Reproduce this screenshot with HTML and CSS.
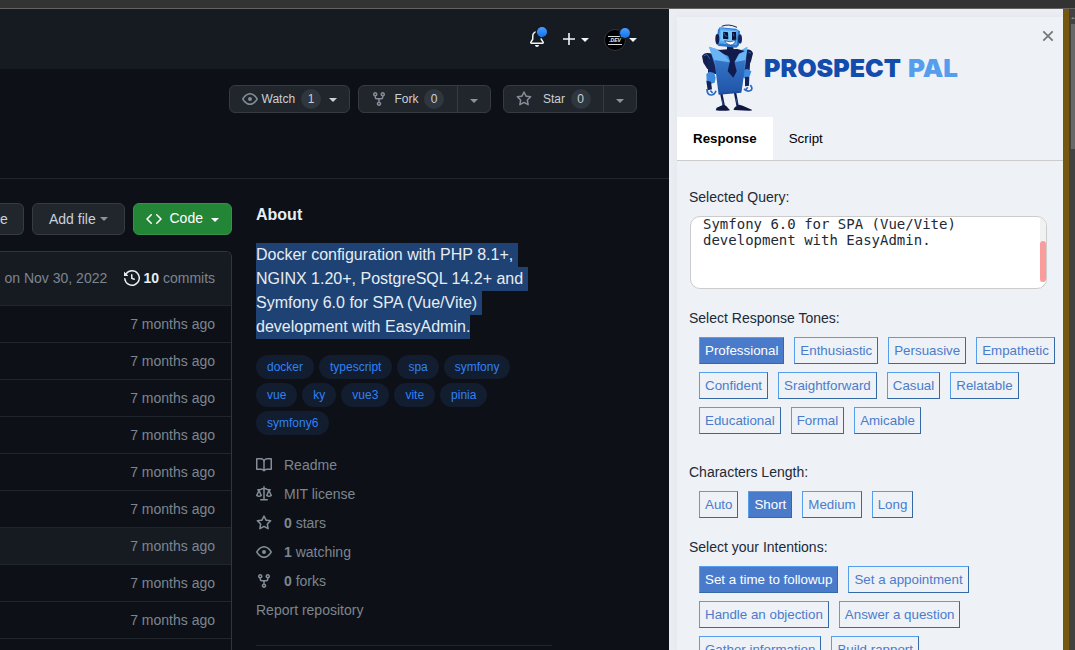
FILE: index.html
```html
<!DOCTYPE html>
<html lang="en">
<head>
<meta charset="utf-8">
<title>Prospect Pal</title>
<link rel="stylesheet" href="styles.css">
</head>
<body>
<svg class="defs" aria-hidden="true">
  <symbol id="eye" viewBox="0 0 16 16"><path d="M8 2c1.981 0 3.671.992 4.933 2.078 1.27 1.091 2.187 2.345 2.637 3.023a1.62 1.62 0 0 1 0 1.798c-.45.678-1.367 1.932-2.637 3.023C11.67 13.008 9.981 14 8 14s-3.671-.992-4.933-2.078C1.797 10.831.88 9.577.43 8.899a1.62 1.62 0 0 1 0-1.798c.45-.678 1.367-1.932 2.637-3.023C4.33 2.992 6.019 2 8 2ZM1.679 7.932a.12.12 0 0 0 0 .136c.411.622 1.241 1.75 2.366 2.717C5.176 11.758 6.527 12.5 8 12.5s2.825-.742 3.955-1.715c1.124-.967 1.954-2.096 2.366-2.717a.12.12 0 0 0 0-.136c-.412-.621-1.242-1.75-2.366-2.717C10.824 4.242 9.473 3.5 8 3.5s-2.824.742-3.955 1.715C2.92 6.182 2.09 7.31 1.679 7.932ZM8 10a2 2 0 1 1 0-4 2 2 0 0 1 0 4Z"/></symbol>
  <symbol id="fork" viewBox="0 0 16 16"><path d="M5 5.372v.878c0 .414.336.75.75.75h4.5a.75.75 0 0 0 .75-.75v-.878a2.25 2.25 0 1 1 1.5 0v.878a2.25 2.25 0 0 1-2.25 2.25h-1.5v2.128a2.251 2.251 0 1 1-1.5 0V8.5h-1.5A2.25 2.25 0 0 1 3.5 6.25v-.878a2.25 2.25 0 1 1 1.5 0ZM5 3.25a.75.75 0 1 0-1.5 0 .75.75 0 0 0 1.5 0Zm6.75.75a.75.75 0 1 0 0-1.5.75.75 0 0 0 0 1.5Zm-3 8.75a.75.75 0 1 0-1.5 0 .75.75 0 0 0 1.5 0Z"/></symbol>
  <symbol id="star" viewBox="0 0 16 16"><path d="M8 .25a.75.75 0 0 1 .673.418l1.882 3.815 4.21.612a.75.75 0 0 1 .416 1.279l-3.046 2.97.719 4.192a.751.751 0 0 1-1.088.791L8 12.347l-3.766 1.98a.75.75 0 0 1-1.088-.79l.72-4.194L.818 6.374a.75.75 0 0 1 .416-1.28l4.21-.611L7.327.668A.75.75 0 0 1 8 .25Zm0 2.445L6.615 5.5a.75.75 0 0 1-.564.41l-3.097.45 2.24 2.184a.75.75 0 0 1 .216.664l-.528 3.084 2.769-1.456a.75.75 0 0 1 .698 0l2.77 1.456-.53-3.084a.75.75 0 0 1 .216-.664l2.24-2.183-3.096-.45a.75.75 0 0 1-.564-.41L8 2.694Z"/></symbol>
  <symbol id="book" viewBox="0 0 16 16"><path d="M0 1.75A.75.75 0 0 1 .75 1h4.253c1.227 0 2.317.59 3 1.501A3.743 3.743 0 0 1 11.006 1h4.245a.75.75 0 0 1 .75.75v10.5a.75.75 0 0 1-.75.75h-4.507a2.25 2.25 0 0 0-1.591.659l-.622.621a.75.75 0 0 1-1.06 0l-.622-.621A2.25 2.25 0 0 0 5.258 13H.75a.75.75 0 0 1-.75-.75Zm7.251 10.324.004-5.073-.002-2.253A2.25 2.25 0 0 0 5.003 2.5H1.5v9h3.757a3.75 3.75 0 0 1 1.994.574ZM8.755 4.75l-.004 7.322a3.752 3.752 0 0 1 1.992-.572H14.5v-9h-3.495a2.25 2.25 0 0 0-2.25 2.25Z"/></symbol>
  <symbol id="law" viewBox="0 0 16 16"><path d="M8.75.75V2h.985c.304 0 .603.08.867.231l1.29.736c.038.022.08.033.124.033h2.234a.75.75 0 0 1 0 1.5h-.427l2.111 4.692a.75.75 0 0 1-.154.838l-.53-.53.529.531-.001.002-.002.002-.006.006-.006.005-.01.01-.045.04c-.21.176-.441.327-.686.45C14.556 10.78 13.88 11 13 11a4.498 4.498 0 0 1-2.023-.454 3.544 3.544 0 0 1-.686-.45l-.045-.04-.016-.015-.006-.006-.004-.004v-.001a.75.75 0 0 1-.154-.838L12.178 4.5h-.162c-.305 0-.604-.079-.868-.231l-1.29-.736a.245.245 0 0 0-.124-.033H8.75V13h2.5a.75.75 0 0 1 0 1.5h-6.5a.75.75 0 0 1 0-1.5h2.5V3.5h-.984a.245.245 0 0 0-.124.033l-1.289.737c-.265.15-.564.23-.869.23h-.162l2.112 4.692a.75.75 0 0 1-.154.838l-.53-.53.529.531-.001.002-.002.002-.006.006-.016.015-.045.04c-.21.176-.441.327-.686.45C4.556 10.78 3.88 11 3 11a4.498 4.498 0 0 1-2.023-.454 3.544 3.544 0 0 1-.686-.45l-.045-.04-.016-.015-.006-.006-.004-.004v-.001a.75.75 0 0 1-.154-.838L2.178 4.5H1.75a.75.75 0 0 1 0-1.5h2.234a.249.249 0 0 0 .125-.033l1.288-.737c.265-.15.564-.23.869-.23h.984V.75a.75.75 0 0 1 1.5 0Zm2.945 8.477c.285.135.718.273 1.305.273s1.02-.138 1.305-.273L13 6.327Zm-10 0c.285.135.718.273 1.305.273s1.02-.138 1.305-.273L3 6.327Z"/></symbol>
  <symbol id="history" viewBox="0 0 16 16"><path d="m.427 1.927 1.215 1.215a8.002 8.002 0 1 1-1.6 5.685.75.75 0 1 1 1.493-.154 6.5 6.5 0 1 0 1.18-4.458l1.358 1.358A.25.25 0 0 1 3.896 6H.25A.25.25 0 0 1 0 5.75V2.104a.25.25 0 0 1 .427-.177ZM7.75 4a.75.75 0 0 1 .75.75v2.992l2.028.812a.75.75 0 0 1-.557 1.392l-2.5-1A.751.751 0 0 1 7 8.25v-3.5A.75.75 0 0 1 7.75 4Z"/></symbol>
  <symbol id="bell" viewBox="0 0 16 16"><path d="M8 16a2 2 0 0 0 1.985-1.75c.017-.137-.097-.25-.235-.25h-3.5c-.138 0-.252.113-.235.25A2 2 0 0 0 8 16ZM3 5a5 5 0 0 1 10 0v2.947c0 .05.015.098.042.139l1.703 2.555A1.519 1.519 0 0 1 13.482 13H2.518a1.516 1.516 0 0 1-1.263-2.36l1.703-2.554A.255.255 0 0 0 3 7.947Zm5-3.5A3.5 3.5 0 0 0 4.5 5v2.947c0 .346-.102.683-.294.97l-1.703 2.556a.017.017 0 0 0-.003.01l.001.006.004.006.006.004.007.001h10.964l.007-.001.006-.004.004-.006.001-.007a.017.017 0 0 0-.003-.01l-1.703-2.554a1.745 1.745 0 0 1-.294-.97V5A3.5 3.5 0 0 0 8 1.5Z"/></symbol>
  <symbol id="code" viewBox="0 0 16 16"><path d="m11.28 3.22 4.25 4.25a.75.75 0 0 1 0 1.06l-4.25 4.25a.749.749 0 0 1-1.275-.326.749.749 0 0 1 .215-.734L13.94 8l-3.72-3.72a.749.749 0 0 1 .326-1.275.749.749 0 0 1 .734.215Zm-6.56 0a.751.751 0 0 1 1.042.018.751.751 0 0 1 .018 1.042L2.06 8l3.72 3.72a.749.749 0 0 1-.326 1.275.749.749 0 0 1-.734-.215L.47 8.53a.75.75 0 0 1 0-1.06Z"/></symbol>
</svg>

<div class="browser-edge"></div>
<div class="screen">
  <main class="repo">
    <header class="topnav">
      <span class="bell"><svg class="icon"><use href="#bell"/></svg><i class="dot"></i></span>
      <svg class="plus" viewBox="0 0 12 12"><path d="M6 0v12M0 6h12"/></svg>
      <i class="caret"></i>
      <span class="avatar"><b>.DEV</b><i class="dot"></i></span>
      <i class="caret"></i>
    </header>
    <section class="actions">
      <div class="btn watch"><svg class="icon"><use href="#eye"/></svg><span>Watch</span><span class="count">1</span><i class="caret"></i></div>
      <div class="btn fork"><svg class="icon"><use href="#fork"/></svg><span>Fork</span><span class="count">0</span><span class="split"><i class="caret"></i></span></div>
      <div class="btn starred"><svg class="icon"><use href="#star"/></svg><span>Star</span><span class="count">0</span><span class="split"><i class="caret"></i></span></div>
    </section>
    <div class="columns">
      <section class="files">
        <div class="toolbar">
          <div class="btn goto">e</div>
          <div class="btn add"><span>Add file</span><i class="caret"></i></div>
          <div class="btn clone"><svg class="icon"><use href="#code"/></svg><span>Code</span><i class="caret"></i></div>
        </div>
        <div class="list">
          <div class="commit"><span class="date">on Nov 30, 2022</span><svg class="icon"><use href="#history"/></svg><span><b>10</b> commits</span></div>
          <div class="row">7 months ago</div>
          <div class="row">7 months ago</div>
          <div class="row">7 months ago</div>
          <div class="row">7 months ago</div>
          <div class="row">7 months ago</div>
          <div class="row">7 months ago</div>
          <div class="row hover">7 months ago</div>
          <div class="row">7 months ago</div>
          <div class="row">7 months ago</div>
          <div class="row"></div>
        </div>
      </section>
      <aside class="about">
        <h2>About</h2>
        <p class="desc"><span>Docker configuration with PHP 8.1+, </span><span>NGINX 1.20+, PostgreSQL 14.2+ and </span><span>Symfony 6.0 for SPA (Vue/Vite) </span><span>development with EasyAdmin.</span></p>
        <div class="topics"><span>docker</span><span>typescript</span><span>spa</span><span>symfony</span><span>vue</span><span>ky</span><span>vue3</span><span>vite</span><span>pinia</span><span>symfony6</span></div>
        <ul class="meta">
          <li><svg class="icon"><use href="#book"/></svg>Readme</li>
          <li><svg class="icon"><use href="#law"/></svg>MIT license</li>
          <li><svg class="icon"><use href="#star"/></svg><span><b>0</b> stars</span></li>
          <li><svg class="icon"><use href="#eye"/></svg><span><b>1</b> watching</span></li>
          <li><svg class="icon"><use href="#fork"/></svg><span><b>0</b> forks</span></li>
          <li>Report repository</li>
        </ul>
        <div class="rule"></div>
      </aside>
    </div>
  </main>

  <section class="panel">
    <div class="sheet">
      <div class="brand">
        <svg class="robot" viewBox="105 69 165 267">
          <defs>
            <linearGradient id="suit" x1="0" y1="0" x2="0" y2="1"><stop offset="0" stop-color="#5ea9ee"/><stop offset=".4" stop-color="#3a80d0"/><stop offset="1" stop-color="#1a489c"/></linearGradient>
          </defs>
          <path d="M170 79q20-9 46 3" fill="none" stroke="#14235a" stroke-width="3"/>
          <path d="M169 281l8 40M210 277l8 42" stroke="#101c4a" stroke-width="7"/>
          <path d="M171 300l4 14M213 296l4 15" stroke="#3873c4" stroke-width="2"/>
          <path d="M152 331l3-8 20-9 8 3 12 14q-20 3-43 0zM206 328l4-7 13-7 10 3 29 13q-2 3-12 2l-44-2z" fill="#0e1843"/>
          <path d="M136 160q-18-4-25 8l4 20 12 19 22-3 5-32zM242 149q18-3 22 11l-6 24-12 26-15-3z" fill="#121e4e"/>
          <path d="M116 168l10-5 9 15M250 156l8 4" fill="none" stroke="#3568b0" stroke-width="3"/>
          <path d="M129 177l20-4 6 50-26-5zM237 178l19-2-2 34-20 3z" fill="#14245b"/>
          <path d="M124 222l10-7 14 4 4 15-3 14-13 4-11-9zM236 211l10-5 13 8-5 15-13 8-9-7z" fill="#3d8ade"/>
          <path d="M124 242l14 3 3 23-13 3zM240 231l13-1-1 27-12 2z" fill="#13245b"/>
          <path d="M126 267q0 17 11 18t16-13M136 272l7 7M237 266q7 10 18 6t1-17M248 262l-6 8" fill="none" stroke="#276bc1" stroke-width="5"/>
          <path d="M132 140l37 12h57l21-12-5 51-13 87-68 6-11-87z" fill="url(#suit)"/>
          <path d="M132 140l36 11 27 35-48-6zM247 141l-23 11-14 34 31-5z" fill="#69b4f4"/>
          <path d="M150 181l42 7 9 46 8-47 31-6-10 91-67 7z" fill="#255db2" opacity=".5"/>
          <path d="M159 150l30-2 28-1 23 6-18 8-14 25-11-15-20-8z" fill="#101b4a"/>
          <path d="M188 164l22-1-3 17 8 34-10 19-17-19 7-32z" fill="#101b4e"/>
          <path d="M186 138h19l1 16-20 2z" fill="#101d50"/>
          <path d="M164 82l49 4 12 8-3 42-8 7-53-5-8-7 6-42z" fill="#2b77cf"/>
          <path d="M165 84l54 7-4 44-56-5z" fill="#58aaf0"/>
          <path d="M167 91l45 3-3 32-43-4z" fill="#78c6fa"/>
          <path d="M175 95l14 2 1 21-16-2zM201 96h12l1 23-13 1z" fill="#081238"/>
          <path d="M178 99l3 9 6 1M204 100l3 9" fill="none" stroke="#398ae0" stroke-width="2"/>
          <path d="M179 122q16 7 33-1-4 14-15 14-13-1-18-13z" fill="#fff" stroke="#123276" stroke-width="2"/>
          <ellipse cx="157" cy="117" rx="6" ry="15" fill="#111e52"/><ellipse cx="225" cy="117" rx="6" ry="14" fill="#142866"/>
        </svg>
        <svg class="wordmark" viewBox="0 0 200 30"><text class="dark" x="0" y="24" textLength="137" lengthAdjust="spacingAndGlyphs">PROSPECT</text><text class="light" x="144" y="24" textLength="50" lengthAdjust="spacingAndGlyphs">PAL</text></svg>
        <svg class="close" viewBox="0 0 12 12"><path d="M1.3 1.3l9.4 9.4M10.7 1.3l-9.4 9.4"/></svg>
      </div>
      <nav class="tabs"><span class="active">Response</span><span>Script</span></nav>
      <div class="form">
        <label>Selected Query:</label>
        <div class="query">Symfony 6.0 for SPA (Vue/Vite)<br>development with EasyAdmin.<div class="track"><i></i><svg viewBox="0 0 6 6"><path d="M2.5 4.5l2-2"/></svg></div></div>
        <label>Select Response Tones:</label>
        <div class="chips tones"><span class="on">Professional</span><span>Enthusiastic</span><span>Persuasive</span><span>Empathetic</span><span>Confident</span><span>Sraightforward</span><span>Casual</span><span>Relatable</span><span>Educational</span><span>Formal</span><span>Amicable</span></div>
        <label>Characters Length:</label>
        <div class="chips length"><span>Auto</span><span class="on">Short</span><span>Medium</span><span>Long</span></div>
        <label>Select your Intentions:</label>
        <div class="chips intents"><span class="on">Set a time to followup</span><span>Set a appointment</span><span>Handle an objection</span><span>Answer a question</span><span>Gather information</span><span>Build rapport</span></div>
      </div>
    </div>
  </section>
  <div class="gutter"></div>
  <div class="scrollbar"><i class="up"></i><i class="thumb"></i></div>
</div>
</body>
</html>
```
FILE: styles.css
```css
* { box-sizing: border-box; }
body { margin: 0; height: 650px; overflow: hidden; background: #0d1117; color: #c9d1d9; font: 14px/20px "Liberation Sans", Arial, sans-serif; }
.defs { display: none; }
.browser-edge { height: 9px; background: #333; border-bottom: 1px solid #636363; }
.screen { display: flex; height: 641px; overflow: hidden; }
.icon { width: 16px; height: 16px; fill: #848d97; flex: none; }
.caret { flex: none; width: 0; height: 0; border: 4px solid transparent; border-top-color: currentColor; border-bottom: 0; }

.repo { width: 669px; flex: none; }
.topnav { height: 60px; background: #161b22; color: #f0f6fc; display: flex; align-items: center; padding-left: 529px; }
.topnav .icon { fill: #f0f6fc; display: block; }
.bell, .avatar { position: relative; }
.dot { position: absolute; width: 10px; height: 10px; border-radius: 50%; background: linear-gradient(#4a9cff, #1272ec); box-shadow: 0 0 0 1.5px #161b22; }
.bell .dot { left: 8px; top: -4px; }
.plus { width: 12px; height: 12px; margin: 0 6px 0 18px; stroke: #f0f6fc; stroke-width: 1.6; }
.avatar { width: 22px; height: 22px; margin: 2px 3px 0 15px; border-radius: 50%; background: #000; border: 1px solid #30363d; display: flex; align-items: center; justify-content: center; }
.avatar b { width: 14px; border: solid #ddd; border-width: 1px 0; font: italic bold 5px/7px "Liberation Sans", sans-serif; text-align: center; color: #eee; }
.avatar .dot { left: 15px; top: -2px; }
.topnav > .caret { margin-top: 2px; }

.actions { height: 110px; display: flex; padding: 16px 0 0 229px; border-bottom: 1px solid #21262d; }
.btn { display: flex; align-items: center; background: #21262d; border: 1px solid #363b42; border-radius: 6px; }
.actions .btn { height: 28px; font-size: 12px; }
.watch { width: 121px; padding-left: 12px; margin-right: 8px; }
.watch > span:nth-of-type(1) { margin-left: 3.5px; }
.fork { width: 133px; padding-left: 12px; margin-right: 12px; }
.fork > span:nth-of-type(1) { margin-left: 7.5px; }
.starred { width: 134px; padding-left: 12px; }
.starred > span:nth-of-type(1) { margin-left: 11px; }
.count { width: 20px; height: 20px; border-radius: 10px; background: #30363d; text-align: center; margin-left: 5.5px; }
.watch .count { margin-left: 6px; }
.watch > .caret { margin-left: 7.5px; margin-top: 1px; }
.split { height: 26px; width: 33px; margin-left: auto; border-left: 1px solid #363b42; display: flex; align-items: center; justify-content: center; color: #8b949e; padding-top: 3px; }

.columns { display: flex; }
.files { width: 232px; padding-top: 24px; }
.toolbar { display: flex; gap: 8px; }
.toolbar .btn { height: 32px; }
.goto { width: 24px; border-left: 0; border-radius: 0 6px 6px 0 !important; }
.add { width: 93px; padding-left: 16px; gap: 4px; }
.add .caret { color: #8b949e; }
.clone { width: 99px; padding-left: 12px; background: #238636; border-color: #36924a; color: #fff; }
.clone .icon { fill: #fff; margin-right: 7.5px; }
.clone span { position: relative; top: -1px; }
.clone .caret { margin: 1px 0 0 8px; }
.list { margin-top: 16px; border: solid #30363d; border-width: 1px 1px 0 0; border-radius: 0 6px 0 0; overflow: hidden; color: #7d8590; height: 420px; }
.commit { height: 53px; display: flex; align-items: center; background: #161b22; padding: 0 0 1px 4.5px; }
.commit .date { width: 119px; white-space: nowrap; }
.commit .icon { fill: #e6edf3; margin-right: 4px; }
.commit b { color: #e6edf3; }
.row { height: 37px; border-top: 1px solid #21262d; padding: 8px 16px 0 0; text-align: right; }
.hover { background: #161b22; }

.about { width: 296px; margin-left: 24px; }
.about h2 { margin: 24px 0 16px; font-size: 16px; line-height: 24px; color: #e6edf3; }
.desc { margin: 0; font-size: 16px; line-height: 24px; color: #e6edf3; display: flex; flex-direction: column; align-items: flex-start; }
.desc span { background: #1f4274; white-space: pre; }
.topics { display: flex; flex-wrap: wrap; gap: 4px 5px; width: 272px; margin-top: 16px; }
.topics span { font-size: 12px; line-height: 24px; height: 24px; padding: 0 11px; border-radius: 12px; background: #121d2f; color: #2f81f7; }
.meta { list-style: none; margin: 20px 0 0; padding: 0; color: #7d8590; }
.meta li { display: flex; align-items: center; height: 20px; margin-bottom: 9px; }
.meta .icon { margin-right: 12px; }
.rule { margin-top: 25px; border-top: 1px solid #21262d; }

.panel { width: 394px; flex: none; padding: 8px 0 0 8px; background: #eaedf2; }
.sheet { width: 386px; height: 633px; background: #eef1f6; box-shadow: 0 0 8px rgba(40, 50, 70, .04); }
.brand { display: flex; height: 100px; padding: 6px 0 0 23px; }
.robot { width: 55px; height: 89px; }
.wordmark { width: 200px; height: 30px; margin: 30px 0 0 9px; font: 900 24.5px Inter, sans-serif; }
.wordmark .dark { fill: #124cac; }
.wordmark .light { fill: #559eee; }
.close { width: 12px; height: 12px; margin: 7px 0 0 78px; stroke: #777; stroke-width: 1.8; fill: none; }
.tabs { height: 44px; display: flex; border-bottom: 1px solid #ccc; font-size: 13.333px; line-height: 43px; color: #000; }
.tabs span { padding: 0 16px; }
.tabs .active { background: #fff; font-weight: bold; }
.form { padding: 26px 0 0 12px; color: #212936; }
.form label { display: block; height: 20px; }
.query { display: block; position: relative; margin: 9px 0 19px 1px; width: 357px; height: 73px; border: 1px solid #ccc; border-radius: 10px; background: #fff; padding: 0 12px; font: 14px/16px "DejaVu Sans Mono", monospace; overflow: hidden; text-box-trim: none; }
.query { line-height: 16px; padding-top: 0; }
.query::before { content: ""; display: block; margin-top: -1px; }
.track { position: absolute; right: 0; top: 0; width: 6px; height: 71px; background: #f1f1f1; padding-top: 24px; }
.track i { display: block; height: 41px; border-radius: 3px; background: #fa9c9c; }
.track svg { display: block; width: 6px; height: 6px; background: #fff; stroke: #444; }
.chips { display: flex; flex-wrap: wrap; gap: 8px 10px; padding: 9px 0 0 10px; margin-right: -8px; font-size: 13.333px; line-height: 15px; }
.chips span { height: 27px; padding: 5px; border: 1px solid; border-color: #559eee #3569a5 #3569a5 #559eee; color: #4b7ccc; white-space: nowrap; }
.chips .on { background: #4a7bcb; color: #fff; }
.tones { margin-bottom: 28px; }
.length { margin-bottom: 19px; width: 300px; }
.intents { width: 320px; }

.gutter { width: 6px; flex: none; background: #765710; }
.scrollbar { width: 6px; flex: none; background: #424242; padding: 8px 0 0 2px; }
.up { display: block; width: 0; border: 2px solid transparent; border-top: 0; border-bottom-color: #888; margin-bottom: 5px; }
.thumb { display: block; height: 125px; background: #686868; }
```
